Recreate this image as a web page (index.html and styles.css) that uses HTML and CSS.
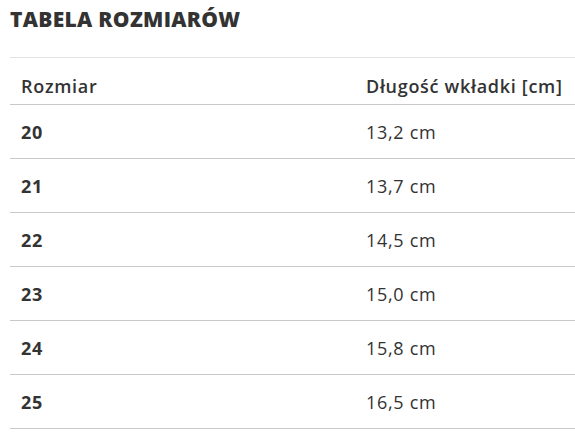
FILE: index.html
```html
<!DOCTYPE html>
<html lang="pl">
<head>
<meta charset="utf-8">
<link rel="stylesheet" href="styles.css">
</head>
<body>
<div class="page">
  <h2 class="title">TABELA ROZMIARÓW</h2>
  <table class="sizes">
    <thead>
      <tr><th class="c1">Rozmiar</th><th>Długość wkładki [cm]</th></tr>
    </thead>
    <tbody>
      <tr><td class="c1">20</td><td>13,2 cm</td></tr>
      <tr><td class="c1">21</td><td>13,7 cm</td></tr>
      <tr><td class="c1">22</td><td>14,5 cm</td></tr>
      <tr><td class="c1">23</td><td>15,0 cm</td></tr>
      <tr><td class="c1">24</td><td>15,8 cm</td></tr>
      <tr><td class="c1">25</td><td>16,5 cm</td></tr>
    </tbody>
  </table>
</div>
</body>
</html>
```
FILE: styles.css
```css
html, body {
  margin: 0;
  padding: 0;
  background: #fff;
}
.page {
  padding: 0 0 0 10px;
  overflow: hidden;
  font-family: "Open Sans", Lato, sans-serif;
  color: #333;
}
.title {
  margin: 0;
  padding-top: 5px;
  height: 57px;
  box-sizing: border-box;
  font-size: 21px;
  line-height: 28px;
  font-weight: 800;
  letter-spacing: 0.3px;
  color: #333;
}
.sizes {
  width: 100%;
  border-collapse: collapse;
  border-top: 1px solid #e3e3e3;
}
.sizes th, .sizes td {
  text-align: left;
  vertical-align: middle;
  padding: 0 0 0 11px;
  font-size: 18px;
  letter-spacing: 0.7px;
}
.sizes th {
  height: 47px;
  padding-top: 10px;
  box-sizing: border-box;
  font-weight: 600;
  border-bottom: 1px solid #c8c8c8;
}
.sizes td {
  height: 53px;
  font-weight: 400;
  border-bottom: 1px solid #c8c8c8;
}
.sizes .c1 {
  width: 334px;
}
.sizes td.c1 {
  font-weight: 700;
}
```
